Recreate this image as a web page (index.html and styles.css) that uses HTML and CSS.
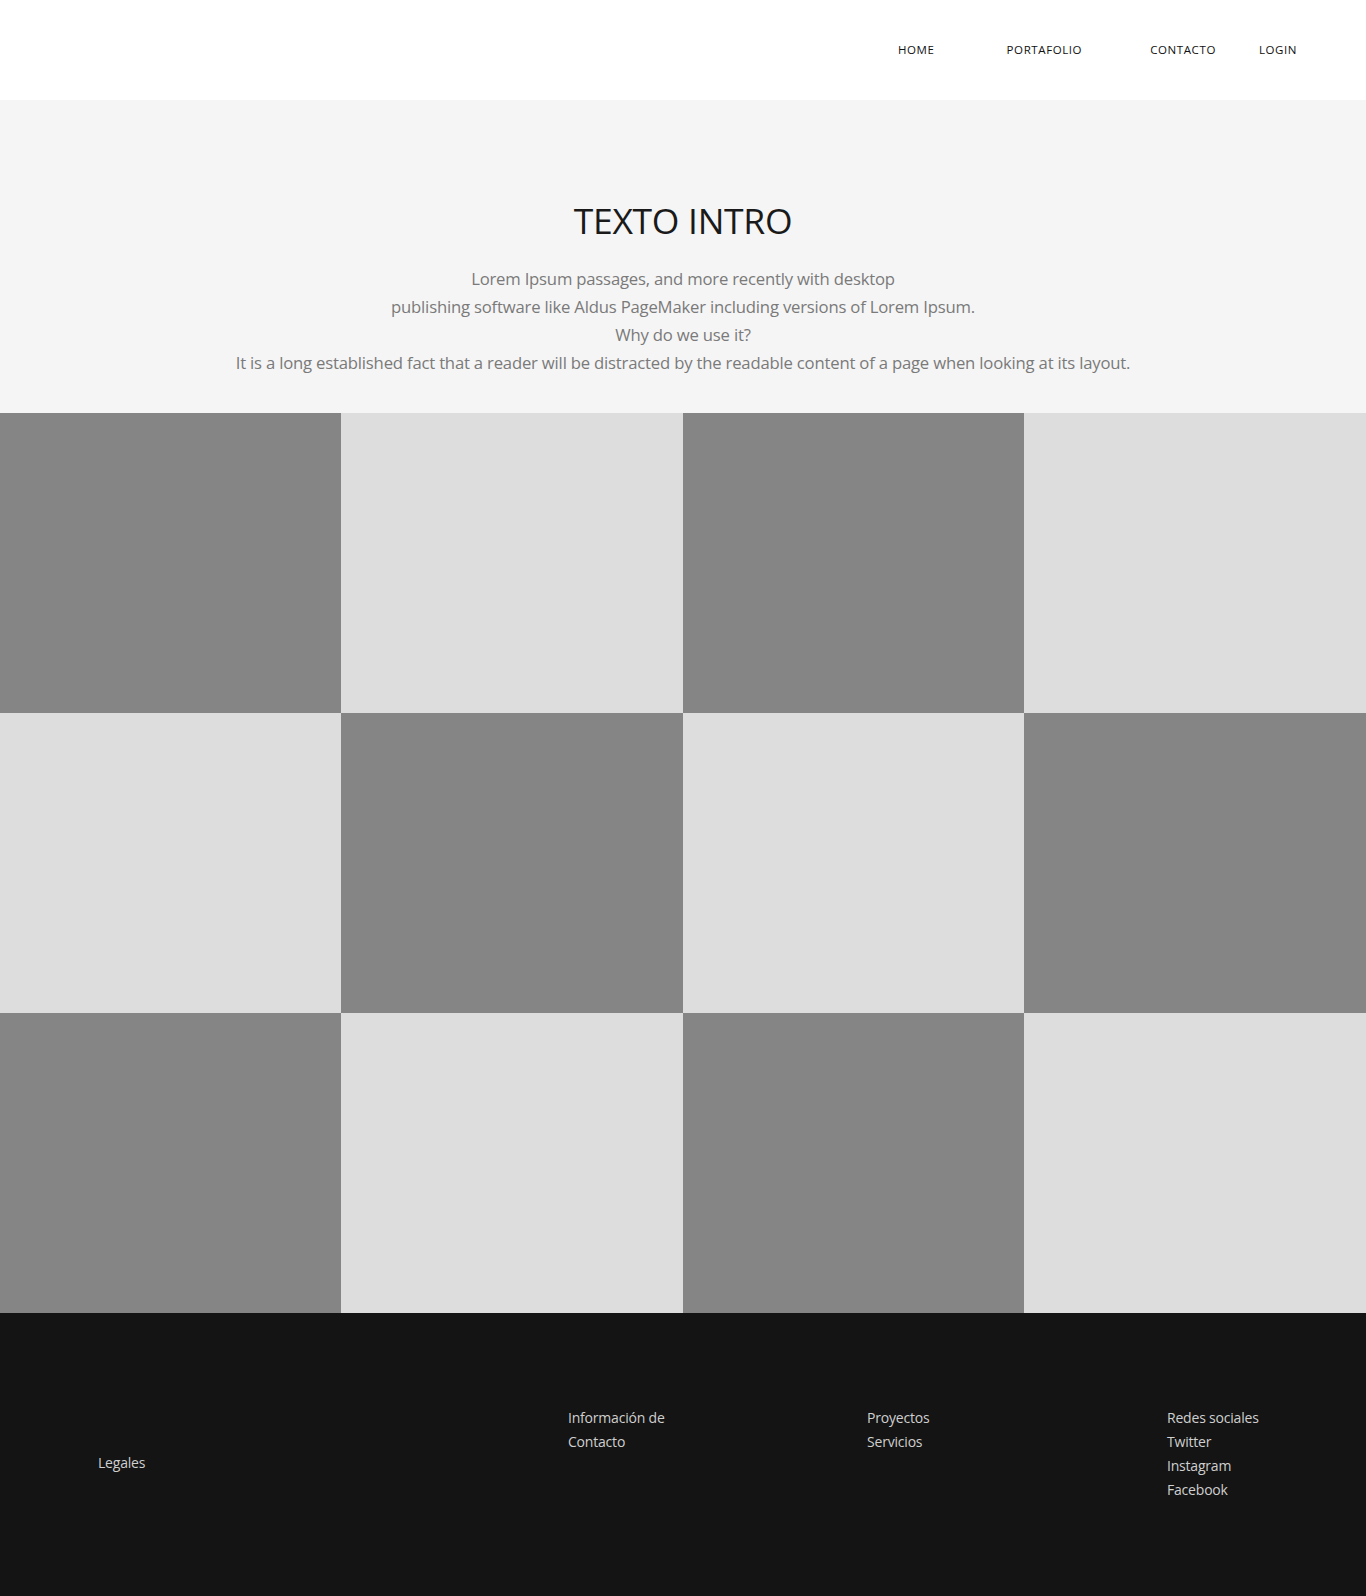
FILE: index.html
```
<!DOCTYPE html>
<html lang="es">
<head>
<meta charset="utf-8">
<title>Texto intro</title>
<link rel="stylesheet" href="styles.css">
</head>
<body>
<header class="site-header">
  <nav class="nav">
    <a class="nav-link nav-home" href="#">HOME</a>
    <a class="nav-link nav-portfolio" href="#">PORTAFOLIO</a>
    <a class="nav-link nav-contact" href="#">CONTACTO</a>
    <a class="nav-link nav-login" href="#">LOGIN</a>
  </nav>
</header>
<section class="intro">
  <h1 class="intro-title">TEXTO INTRO</h1>
  <p class="intro-text">Lorem Ipsum passages, and more recently with desktop<br>publishing software like Aldus PageMaker including versions of Lorem Ipsum.<br>Why do we use it?<br>It is a long established fact that a reader will be distracted by the readable content of a page when looking at its layout.</p>
</section>
<section class="gallery">
  <div class="tile dark"></div><div class="tile light"></div><div class="tile dark"></div><div class="tile light"></div>
  <div class="tile light"></div><div class="tile dark"></div><div class="tile light"></div><div class="tile dark"></div>
  <div class="tile dark"></div><div class="tile light"></div><div class="tile dark"></div><div class="tile light"></div>
</section>
<footer class="site-footer">
  <div class="footer-col legal"><a href="#">Legales</a></div>
  <div class="footer-col"><a href="#">Información de</a><a href="#">Contacto</a></div>
  <div class="footer-col"><a href="#">Proyectos</a><a href="#">Servicios</a></div>
  <div class="footer-col"><a href="#">Redes sociales</a><a href="#">Twitter</a><a href="#">Instagram</a><a href="#">Facebook</a></div>
</footer>
</body>
</html>
```
FILE: styles.css
```
* { box-sizing: border-box; }
body {
  margin: 0;
  font-family: "Open Sans", "Noto Sans", sans-serif;
  background: #141414;
}
a { text-decoration: none; color: inherit; }

.site-header {
  height: 100px;
  background: #ffffff;
  display: flex;
  align-items: center;
}
.nav {
  display: flex;
  align-items: center;
  padding-left: 898px;
}
.nav-link {
  font-size: 11.5px;
  letter-spacing: 0.6px;
  color: #111;
  line-height: 14px;
}
.nav-home { margin-right: 72px; }
.nav-portfolio { margin-right: 68px; }
.nav-contact { margin-right: 43px; }

.intro {
  height: 313px;
  background: #f5f5f5;
  text-align: center;
  padding-top: 95px;
}
.intro-title {
  margin: 0;
  font-weight: 400;
  font-size: 35.5px;
  line-height: 50px;
  color: #1a1a1a;
  letter-spacing: -0.3px;
}
.intro-text {
  margin: 20px 0 0;
  font-size: 16.7px;
  line-height: 28px;
  color: #7a7a7a;
  letter-spacing: -0.2px;
}

.gallery {
  display: grid;
  grid-template-columns: 341px 342px 341px 1fr;
  grid-auto-rows: 300px;
}
.tile.dark { background: #858585; }
.tile.light { background: #dddddd; }

.site-footer {
  height: 284px;
  background: #141414;
  display: grid;
  grid-template-columns: 470px 299px 300px auto;
  padding: 93px 0 0 98px;
  align-items: start;
}
.footer-col {
  display: flex;
  flex-direction: column;
  font-size: 14px;
  line-height: 24px;
  color: #cfcfcf;
  letter-spacing: -0.2px;
}
.footer-col.legal { padding-top: 45px; }
```
